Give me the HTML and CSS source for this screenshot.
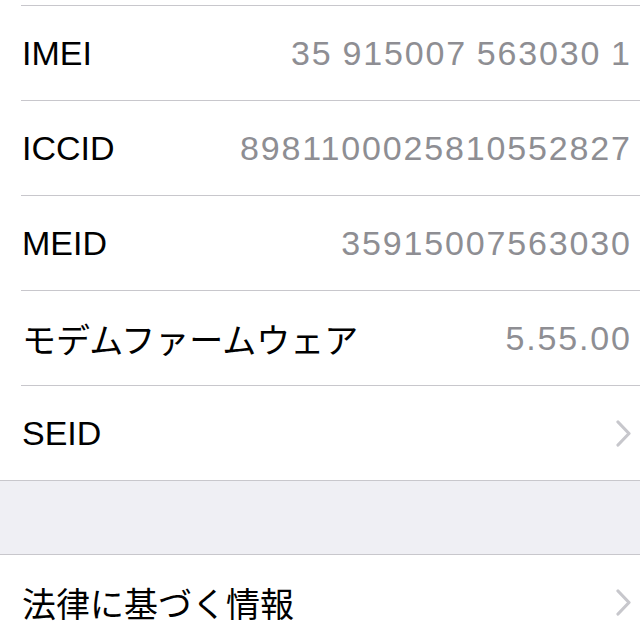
FILE: index.html
```html
<!DOCTYPE html>
<html lang="ja">
<head>
    <meta charset="UTF-8">
    <meta name="viewport" content="width=device-width, initial-scale=1.0">
    <title>情報</title>
    <link rel="stylesheet" href="styles.css">
</head>
<body>
    <div class="group group-top">
        <div class="row row-stub"><div class="cell"></div></div>

        <div class="row">
            <div class="cell">
                <span class="label">IMEI</span>
                <span class="value">35 915007 563030 1</span>
            </div>
        </div>

        <div class="row">
            <div class="cell">
                <span class="label">ICCID</span>
                <span class="value">8981100025810552827</span>
            </div>
        </div>

        <div class="row">
            <div class="cell">
                <span class="label">MEID</span>
                <span class="value">35915007563030</span>
            </div>
        </div>

        <div class="row">
            <div class="cell">
                <span class="label">モデムファームウェア</span>
                <span class="value">5.55.00</span>
            </div>
        </div>

        <div class="row">
            <div class="cell">
                <span class="label">SEID</span>
                <svg class="chevron" width="17" height="27" viewBox="0 0 17 27">
                    <polyline points="3,2 14,13.5 3,25" fill="none" stroke="#c7c7cc" stroke-width="3.2" stroke-linecap="round" stroke-linejoin="round"/>
                </svg>
            </div>
        </div>
    </div>

    <div class="spacer"></div>

    <div class="group">
        <div class="row">
            <div class="cell">
                <span class="label">法律に基づく情報</span>
                <svg class="chevron" width="17" height="27" viewBox="0 0 17 27">
                    <polyline points="3,2 14,13.5 3,25" fill="none" stroke="#c7c7cc" stroke-width="3.2" stroke-linecap="round" stroke-linejoin="round"/>
                </svg>
            </div>
        </div>
    </div>
</body>
</html>
```

FILE: styles.css
```css
/* General Styles */
body {
    margin: 0;
    padding: 0;
    background-color: #efeff4;
    font-family: "Liberation Sans", "Noto Sans CJK JP", sans-serif;
    font-size: 34px;
    color: #000;
    overflow: hidden;
}

/* Groups */
.group {
    background-color: #ffffff;
}

.group-top {
    border-bottom: 1px solid #c8c7cc;
}

/* Rows */
.row {
    padding-left: 21px;
}

.cell {
    display: flex;
    align-items: center;
    justify-content: space-between;
    height: 94px;
    padding: 0 10px 0 1px;
    border-bottom: 1px solid #c8c7cc;
}

.row-stub .cell {
    height: 5px;
}

.group-top .row:last-child .cell {
    border-bottom: none;
}

.value {
    color: #8e8e93;
    letter-spacing: 1.85px;
    word-spacing: -1.5px;
    margin-right: -1.85px;
}

.chevron {
    display: block;
    margin-right: -2px;
}

/* Section gap */
.spacer {
    height: 73px;
    border-bottom: 1px solid #c8c7cc;
}
```
